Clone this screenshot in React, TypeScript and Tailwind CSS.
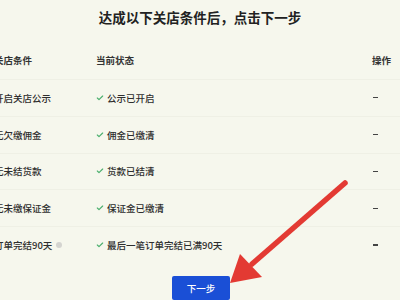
import { Check } from 'lucide-react'

const rows = [
  { cond: '开启关店公示', status: '公示已开启' },
  { cond: '无欠缴佣金', status: '佣金已缴清' },
  { cond: '无未结货款', status: '货款已结清' },
  { cond: '无未缴保证金', status: '保证金已缴清' },
  { cond: '订单完结90天', status: '最后一笔订单完结已满90天', info: true },
]

const font = { fontFamily: '"Noto Sans CJK SC", "Noto Sans", sans-serif' }

export default function App() {
  return (
    <div className="relative w-[400px] h-[300px] overflow-hidden bg-[#f6f7ed] text-[#2b2b2b]" style={font}>
      <div className="h-[34px] flex items-center justify-center">
        <h1 className="text-[13.5px] font-bold text-[#222]">达成以下关店条件后，点击下一步</h1>
      </div>

      <div className="mt-[8px] ml-[-6px] w-[406px]">
        <div className="grid grid-cols-[102px_276px_1fr] h-[37px] items-center text-[9.5px] font-bold text-[#333]">
          <span>关店条件</span>
          <span>当前状态</span>
          <span>操作</span>
        </div>
        {rows.map((r, i) => (
          <div
            key={i}
            className="grid grid-cols-[102px_276px_1fr] h-[36.8px] items-center text-[9.5px] font-medium text-[#2e2e2e] border-t border-[#eff0e5]"
          >
            <span className="flex items-center gap-[4px]">
              {r.cond}
              {r.info && <span className="w-[6px] h-[6px] rounded-full bg-[#d4d4d0]" />}
            </span>
            <span className="flex items-center gap-[3px]">
              <Check size={8} strokeWidth={3.5} className="text-[#4caf6e]" />
              {r.status}
            </span>
            <span className="pl-[1px]">
              <span className="block w-[5px] h-[1.2px] bg-[#444]" />
            </span>
          </div>
        ))}
      </div>

      <div className="mt-[13px] flex justify-center">
        <button className="ml-[2px] w-[58px] h-[24px] rounded-[2px] bg-[#1a4fd6] text-white text-[9.5px] font-medium flex items-center justify-center">
          下一步
        </button>
      </div>

      <svg className="absolute inset-0 pointer-events-none" width="400" height="300" viewBox="0 0 400 300">
        <line x1="345" y1="183" x2="252" y2="264" stroke="#e33a33" strokeWidth="5.5" strokeLinecap="round" />
        <polygon points="230,283 240,254 262,277" fill="#e33a33" />
      </svg>
    </div>
  )
}
